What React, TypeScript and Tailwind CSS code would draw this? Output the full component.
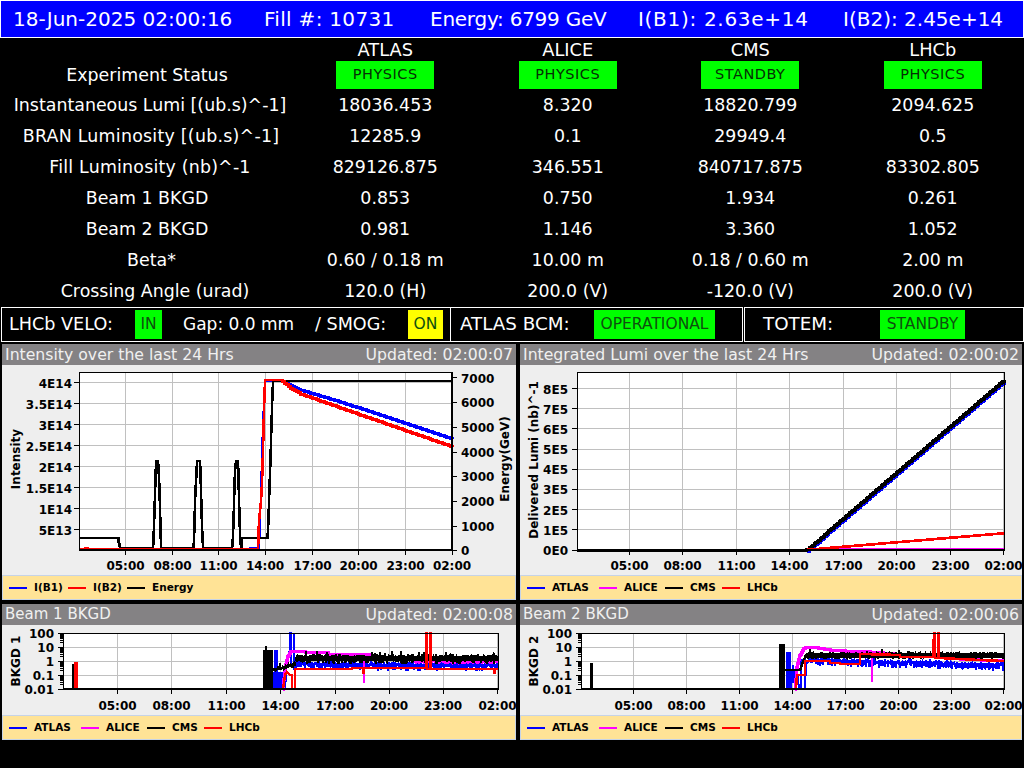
import type { ReactNode } from "react";

type Series = { color: string; points: string; width?: number };
type Tick = { at: number; label: string };

const EXPERIMENTS = ["ATLAS", "ALICE", "CMS", "LHCb"];
const TIMES = ["05:00", "08:00", "11:00", "14:00", "17:00", "20:00", "23:00", "02:00"];

const ROWS = [
  { label: "Instantaneous Lumi [(ub.s)^-1]", shift: "pl-[6px]", values: ["18036.453", "8.320", "18820.799", "2094.625"] },
  { label: "BRAN Luminosity [(ub.s)^-1]", shift: "pl-[8px] tracking-[0.25px]", values: ["12285.9", "0.1", "29949.4", "0.5"] },
  { label: "Fill Luminosity (nb)^-1", shift: "pl-[6px] tracking-[0.2px]", values: ["829126.875", "346.551", "840717.875", "83302.805"] },
  { label: "Beam 1 BKGD", shift: "", values: ["0.853", "0.750", "1.934", "0.261"] },
  { label: "Beam 2 BKGD", shift: "", values: ["0.981", "1.146", "3.360", "1.052"] },
  { label: "Beta*", shift: "pl-[9px]", values: ["0.60 / 0.18 m", "10.00 m", "0.18 / 0.60 m", "2.00 m"] },
  { label: "Crossing Angle (urad)", shift: "pl-[16px]", values: ["120.0 (H)", "200.0 (V)", "-120.0 (V)", "200.0 (V)"] },
];

// deterministic jitter so the background traces look the same on every load
function jitter(x0: number, x1: number, y: (x: number) => number, up: number, down: number, seed: number) {
  let s = seed;
  const rnd = () => {
    s = (s * 16807) % 2147483647;
    return s / 2147483647;
  };
  const pts: string[] = [];
  for (let x = x0; x <= x1; x += 1) {
    const spike = rnd() > 0.93 ? 3 : 0;
    pts.push(`${x},${(y(x) - rnd() * up - spike).toFixed(1)}`);
    pts.push(`${x},${(y(x) + rnd() * down).toFixed(1)}`);
  }
  return pts.join(" ");
}

// the reference plots are aliased: turn sloped segments into small stairs
function stairs(points: string, step = 2) {
  const pts = points.split(" ").map((p) => p.split(",").map(Number));
  const out: string[] = [`${pts[0][0]},${pts[0][1]}`];
  for (let i = 1; i < pts.length; i++) {
    const [ax, ay] = pts[i - 1];
    const [bx, by] = pts[i];
    const steps = ax === bx || ay === by ? 1 : Math.ceil(Math.max(Math.abs(bx - ax), Math.abs(by - ay)) / step);
    let py = ay;
    for (let k = 1; k <= steps; k++) {
      const nx = ax + ((bx - ax) * k) / steps;
      const ny = ay + ((by - ay) * k) / steps;
      out.push(`${nx.toFixed(1)},${py.toFixed(1)}`);
      out.push(`${nx.toFixed(1)},${ny.toFixed(1)}`);
      py = ny;
    }
  }
  return out.join(" ");
}

const intensitySeries: Series[] = [
  { color: "#0000ff", points: stairs("79,549 250,549 250,548 259,548 260,520 261,490 262,450 263,420 265,381 281,381") },
  { color: "#0000ff", points: stairs("281,381 300,390 340,402 452,439"), width: 3 },
  {
    color: "#000000",
    points: stairs(
      "79,538 118,538 119,544 120,548 153,548 154,526 155,492 156,461 158,461 159,478 160,510 161,548 193,548 194,540 195,500 197,461 200,461 201,492 202,528 203,548 232,548 233,536 234,502 235,468 236,461 238,461 239,500 240,536 241,548 242,548 242,538 267,538 268,530 270,472 271,440 272,406 273,381 452,381"
    ),
    width: 2.5,
  },
  { color: "#ff0000", points: stairs("79,549 85,549 85,548 88,548 88,549 258,549 259,520 261,500 262,483 263,450 264,408 265,380 281,380"), width: 2.5 },
  { color: "#ff0000", points: stairs("281,380 290,388 300,394 340,408 452,447"), width: 3 },
];

const lumiSeries: Series[] = [
  { color: "#0000ff", points: stairs("577,550 805,550 808,551 1004,382", 1.5), width: 3 },
  { color: "#ff00ff", points: stairs("577,550 830,550 830,549 1004,549") },
  { color: "#000000", points: stairs("577,550 805,550 808,549 1004,380", 1.5), width: 3 },
  { color: "#ff0000", points: stairs("577,550 805,550 1004,533", 3), width: 2.5 },
];

const beam1Series: Series[] = [
  { color: "#0000ff", points: "278,689 278,672", width: 10 },
  { color: "#0000ff", points: "276,689 276,650", width: 4 },
  { color: "#0000ff", points: "285,689 287,660 290,650 290,633 291,633 291,665 294,665 294,633 294,670" },
  { color: "#0000ff", points: jitter(296, 497, (x) => 664 + (x - 296) * 0.008, 3, 6, 4211) },
  { color: "#ff00ff", points: stairs("283,689 285,668 288,655 290,651 305,651 305,652 328,652 328,654 372,655"), width: 3 },
  { color: "#ff00ff", points: "364,654 364,683", width: 2 },
  { color: "#ff00ff", points: jitter(415, 497, () => 661, 2, 3, 991), width: 2 },
  { color: "#000000", points: "268,689 268,650", width: 10 },
  { color: "#000000", points: "266,650 266,646", width: 2 },
  { color: "#000000", points: jitter(273, 295, (x) => 670 - (x - 273) * 0.25, 2, 2, 5501), width: 2 },
  { color: "#000000", points: "296,658 497,658", width: 5 },
  { color: "#000000", points: jitter(296, 497, () => 658, 4, 6, 7717), width: 2 },
  { color: "#000000", points: "73,689 73,664", width: 2 },
  { color: "#ff0000", points: "75.5,689 75.5,662", width: 4 },
  {
    color: "#ff0000",
    points:
      "63,689 283,689 285,675 287,672 290,675 292,675 292,689 295,689 295,669 352,669 352,668 363,668 363,673 364,673 364,668 426,668 426,633 427,633 427,669 430,669 430,633 431,633 431,669 494,669 494,673 495,673 495,669 498,669",
    width: 2.5,
  },
];

const beam2Series: Series[] = [
  { color: "#0000ff", points: "788,689 788,652", width: 5 },
  { color: "#0000ff", points: "791,689 793,665 795,689 797,670 799,689 801,689 801,660 805,660 805,689 806,665 812,655" },
  { color: "#0000ff", points: jitter(810, 1003, (x) => 660 + (x - 810) * 0.025, 2, 6, 3391) },
  { color: "#ff00ff", points: stairs("795,689 797,665 800,654 805,647 812,647 830,650 845,651 870,652 895,654 930,656 960,659 1003,661"), width: 3 },
  { color: "#ff00ff", points: "872,652 872,682", width: 2 },
  { color: "#000000", points: "591,689 591,663", width: 3 },
  { color: "#000000", points: "782,689 782,644", width: 6 },
  { color: "#000000", points: "785,670 800,670 803,662 806,655", width: 2.5 },
  { color: "#000000", points: "806,655 1003,655", width: 5 },
  { color: "#000000", points: jitter(806, 1003, () => 655, 3, 4, 8123), width: 2 },
  {
    color: "#ff0000",
    points:
      "581,689 796,689 797,675 805,675 805,661 830,661 830,663 840,663 840,664 860,664 860,654 900,655 900,657 933,657 934,633 935,633 935,658 938,658 938,633 939,633 939,658 960,659 980,660 1004,661",
    width: 2.5,
  },
];

function logTicks(top: number) {
  const ticks: number[] = [];
  for (let d = 0; d < 4; d++) {
    for (let k = 2; k < 10; k++) ticks.push(top - d * 14 - 14 * Math.log10(k));
  }
  return ticks;
}

type ChartProps = {
  viewBox: [number, number, number, number];
  plot: { left: number; right: number; top: number; bottom: number };
  xTicks: number[];
  yTicks: Tick[];
  rightTicks?: Tick[];
  series: Series[];
  yTitle: { x: number; y: number; text: string };
  rightTitle?: { x: number; y: number; text: string };
  labelEnd: number;
  xLabelY: number;
  log?: boolean;
};

function Chart({ viewBox, plot, xTicks, yTicks, rightTicks, series, yTitle, rightTitle, labelEnd, xLabelY, log }: ChartProps) {
  const { left, right, top, bottom } = plot;
  return (
    <svg
      viewBox={viewBox.join(" ")}
      width={viewBox[2]}
      height={viewBox[3]}
      className="block"
    >
      <g shapeRendering="crispEdges">
        <rect x={left} y={top} width={right - left} height={bottom - top} fill="#ffffff" />
        {xTicks.map((x) => (
          <line key={x} x1={x} x2={x} y1={top} y2={bottom} stroke="#c0c0c0" strokeWidth={1} />
        ))}
        {yTicks.map((t) => (
          <line key={t.label} x1={left} x2={right} y1={t.at} y2={t.at} stroke="#c0c0c0" strokeWidth={1} />
        ))}
        {series.map((s, i) => (
          <polyline key={i} points={s.points} fill="none" stroke={s.color} strokeWidth={s.width ?? 2} />
        ))}
        <rect x={left} y={top} width={right - left} height={bottom - top} fill="none" stroke="#000000" strokeWidth={1} />
        <line x1={left} x2={right + 1} y1={bottom} y2={bottom} stroke="#000000" strokeWidth={2} />
        {xTicks.map((x) => (
          <line key={x} x1={x} x2={x} y1={bottom} y2={bottom + 5} stroke="#000000" strokeWidth={1} />
        ))}
        {yTicks.map((t) => (
          <line key={t.label} x1={left - 5} x2={left} y1={t.at} y2={t.at} stroke="#000000" strokeWidth={1} />
        ))}
        {log &&
          logTicks(bottom).map((y) => (
            <line key={y} x1={left - 3} x2={left} y1={y} y2={y} stroke="#000000" strokeWidth={1} />
          ))}
        {rightTicks && <line x1={right} x2={right} y1={top} y2={bottom} stroke="#000000" strokeWidth={2} />}
        {rightTicks?.map((t) => (
          <line key={t.label} x1={right} x2={right + 5} y1={t.at} y2={t.at} stroke="#000000" strokeWidth={1} />
        ))}
      </g>
      <g className="text-[12px] font-bold" fill="#000000">
        {xTicks.map((x, i) => (
          <text key={x} x={x} y={xLabelY} textAnchor="middle">
            {TIMES[i]}
          </text>
        ))}
        {yTicks.map((t) => (
          <text key={t.label} x={labelEnd} y={t.at + 5} textAnchor="end">
            {t.label}
          </text>
        ))}
        {rightTicks?.map((t) => (
          <text key={t.label} x={right + 9} y={t.at + 5}>
            {t.label}
          </text>
        ))}
        <text x={yTitle.x} y={yTitle.y} textAnchor="middle" transform={`rotate(-90 ${yTitle.x} ${yTitle.y})`}>
          {yTitle.text}
        </text>
        {rightTitle && (
          <text x={rightTitle.x} y={rightTitle.y} textAnchor="middle" transform={`rotate(-90 ${rightTitle.x} ${rightTitle.y})`}>
            {rightTitle.text}
          </text>
        )}
      </g>
    </svg>
  );
}

type LegendItem = { label: string; swatch: string; width: string };

function Legend({ items }: { items: LegendItem[] }) {
  return (
    <div className="flex h-[25px] items-center border border-[#c6d3e6] bg-[#ffe396] pl-[6px]">
      {items.map((item) => (
        <div key={item.label} className={`flex items-center gap-[7px] ${item.width}`}>
          <div className={`h-[2px] w-[18px] ${item.swatch}`} />
          <span className="text-[10.5px] font-bold leading-none text-black">{item.label}</span>
        </div>
      ))}
    </div>
  );
}

function Panel({ title, titleClass = "", updated, legend, children }: { title: string; titleClass?: string; updated: string; legend: ReactNode; children: ReactNode }) {
  return (
    <section className="flex flex-col bg-[#eeeeee]">
      <header className="flex h-[21px] items-center justify-between bg-[#848284] px-[3px] text-[15.7px] leading-none text-[#f0f0f0]">
        <span className={titleClass}>{title}</span>
        <span>Updated: {updated}</span>
      </header>
      {children}
      {legend}
    </section>
  );
}

function Badge({ text, className }: { text: string; className: string }) {
  return (
    <span className={`flex h-[29px] items-center justify-center text-[15.5px] text-[#0f4f0f] ${className}`}>{text}</span>
  );
}

const EXP_LEGEND: LegendItem[] = [
  { label: "ATLAS", swatch: "bg-[#0000ff]", width: "w-[72px]" },
  { label: "ALICE", swatch: "bg-[#ff00ff]", width: "w-[66px]" },
  { label: "CMS", swatch: "bg-black", width: "w-[57px]" },
  { label: "LHCb", swatch: "bg-[#ff0000]", width: "w-[60px]" },
];

const INTENSITY_LEGEND: LegendItem[] = [
  { label: "I(B1)", swatch: "bg-[#0000ff]", width: "w-[59px]" },
  { label: "I(B2)", swatch: "bg-[#ff0000]", width: "w-[59px]" },
  { label: "Energy", swatch: "bg-black", width: "w-[70px]" },
];

export default function App() {
  return (
    <div className="flex h-[768px] w-[1024px] flex-col overflow-hidden bg-black font-['DejaVu_Sans',sans-serif] text-white">
      <div className="flex h-[38px] items-center border border-white bg-[#0000ff] pl-[12px] text-[20px] leading-none">
        <span className="w-[251px]">18-Jun-2025 02:00:16</span>
        <span className="w-[166px] tracking-[0.3px]">Fill #: 10731</span>
        <span className="w-[208px] tracking-[-0.25px]">Energy: 6799 GeV</span>
        <span className="w-[205px] tracking-[0.7px]">I(B1): 2.63e+14</span>
        <span>I(B2): 2.45e+14</span>
      </div>

      <div className="flex h-[269px] flex-col text-[17.4px] leading-none">
        <div className="grid h-[23px] grid-cols-[294px_repeat(4,182.5px)] items-center text-center text-[17.8px]">
          <span />
          {EXPERIMENTS.map((name) => (
            <span key={name}>{name}</span>
          ))}
        </div>
        <div className="grid h-[29px] grid-cols-[294px_repeat(4,182.5px)] items-center text-center">
          <span>Experiment Status</span>
          {["PHYSICS", "PHYSICS", "STANDBY", "PHYSICS"].map((status, i) => (
            <div key={i} className="flex h-[29px] justify-center">
              <span className="flex h-[28px] w-[98px] items-center justify-center bg-[#00ff00] pb-[1px] text-[14.5px] tracking-[0.5px] text-[#052f05]">
                {status}
              </span>
            </div>
          ))}
        </div>
        {ROWS.map((row) => (
          <div key={row.label} className="grid h-[31px] grid-cols-[294px_repeat(4,182.5px)] items-center text-center">
            <span className={row.shift}>{row.label}</span>
            {row.values.map((value, i) => (
              <span key={i}>{value}</span>
            ))}
          </div>
        ))}
      </div>

      <div className="flex h-[35px] pl-[1px] text-[17.6px] leading-none">
        <div className="flex w-[450px] items-center border border-white pl-[7px]">
          <span className="w-[126px]">LHCb VELO:</span>
          <Badge text="IN" className="w-[27px] bg-[#00ff00]" />
          <span className="ml-[21px] w-[132px] text-[17px]">Gap: 0.0 mm</span>
          <span className="w-[93px]">/ SMOG:</span>
          <Badge text="ON" className="w-[35px] bg-[#ffff00]" />
        </div>
        <div className="flex w-[292px] items-center border-y border-r border-white pl-[9px] text-[18.3px]">
          <span className="w-[134px]">ATLAS BCM:</span>
          <Badge text="OPERATIONAL" className="w-[121px] bg-[#00ff00]" />
        </div>
        <div className="ml-[1px] flex w-[280px] items-center border border-white pl-[18px] text-[18.3px]">
          <span className="w-[117px]">TOTEM:</span>
          <Badge text="STANDBY" className="w-[85px] bg-[#00ff00]" />
        </div>
      </div>

      <div className="mt-[2px] grid grid-cols-[514px_502px] gap-x-[4px] gap-y-[4px] pl-[2px]">
        <Panel title="Intensity over the last 24 Hrs" updated="02:00:07" legend={<Legend items={INTENSITY_LEGEND} />}>
          <Chart
            viewBox={[2, 365, 514, 210]}
            plot={{ left: 79, right: 452, top: 372, bottom: 550 }}
            xTicks={[125.5, 172.5, 218.5, 265, 312.5, 358.5, 405.5, 452]}
            yTicks={[
              { at: 382.5, label: "4E14" },
              { at: 403.5, label: "3.5E14" },
              { at: 424.5, label: "3E14" },
              { at: 445.5, label: "2.5E14" },
              { at: 466.5, label: "2E14" },
              { at: 487.5, label: "1.5E14" },
              { at: 508.5, label: "1E14" },
              { at: 529.5, label: "5E13" },
            ]}
            rightTicks={[
              { at: 377.5, label: "7000" },
              { at: 402, label: "6000" },
              { at: 427, label: "5000" },
              { at: 452, label: "4000" },
              { at: 476, label: "3000" },
              { at: 501, label: "2000" },
              { at: 526, label: "1000" },
              { at: 550, label: "0" },
            ]}
            series={intensitySeries}
            yTitle={{ x: 20, y: 459, text: "Intensity" }}
            rightTitle={{ x: 509, y: 459, text: "Energy(GeV)" }}
            labelEnd={72}
            xLabelY={570}
          />
        </Panel>
        <Panel title="Integrated Lumi over the last 24 Hrs" updated="02:00:02" legend={<Legend items={EXP_LEGEND} />}>
          <Chart
            viewBox={[520, 365, 502, 210]}
            plot={{ left: 577, right: 1004, top: 372, bottom: 550 }}
            xTicks={[629.5, 682.5, 736.5, 789.5, 843.5, 896.5, 950.5, 1003.5]}
            yTicks={[
              { at: 388.5, label: "8E5" },
              { at: 408.5, label: "7E5" },
              { at: 428.5, label: "6E5" },
              { at: 449, label: "5E5" },
              { at: 469, label: "4E5" },
              { at: 489, label: "3E5" },
              { at: 509.5, label: "2E5" },
              { at: 529.5, label: "1E5" },
              { at: 550, label: "0E0" },
            ]}
            series={lumiSeries}
            yTitle={{ x: 538, y: 460, text: "Delivered Lumi (nb)^-1" }}
            labelEnd={568}
            xLabelY={570}
          />
        </Panel>
        <Panel title="Beam 1 BKGD" titleClass="text-[15px]" updated="02:00:08" legend={<Legend items={EXP_LEGEND} />}>
          <Chart
            viewBox={[2, 625, 514, 90]}
            plot={{ left: 63, right: 498, top: 633, bottom: 689 }}
            xTicks={[117.5, 171.5, 226.5, 280.5, 335, 389, 443, 497.5]}
            yTicks={[
              { at: 633, label: "100" },
              { at: 647, label: "10" },
              { at: 661, label: "1" },
              { at: 675, label: "0.1" },
              { at: 689, label: "0.01" },
            ]}
            series={beam1Series}
            yTitle={{ x: 20, y: 661, text: "BKGD 1" }}
            labelEnd={54}
            xLabelY={710}
            log
          />
        </Panel>
        <Panel title="Beam 2 BKGD" titleClass="text-[15px]" updated="02:00:06" legend={<Legend items={EXP_LEGEND} />}>
          <Chart
            viewBox={[520, 625, 502, 90]}
            plot={{ left: 581, right: 1004, top: 633, bottom: 689 }}
            xTicks={[633.5, 686.5, 739.5, 792.5, 845.5, 898.5, 951.5, 1003.5]}
            yTicks={[
              { at: 633, label: "100" },
              { at: 647, label: "10" },
              { at: 661, label: "1" },
              { at: 675, label: "0.1" },
              { at: 689, label: "0.01" },
            ]}
            series={beam2Series}
            yTitle={{ x: 538, y: 661, text: "BKGD 2" }}
            labelEnd={572}
            xLabelY={710}
            log
          />
        </Panel>
      </div>
    </div>
  );
}
